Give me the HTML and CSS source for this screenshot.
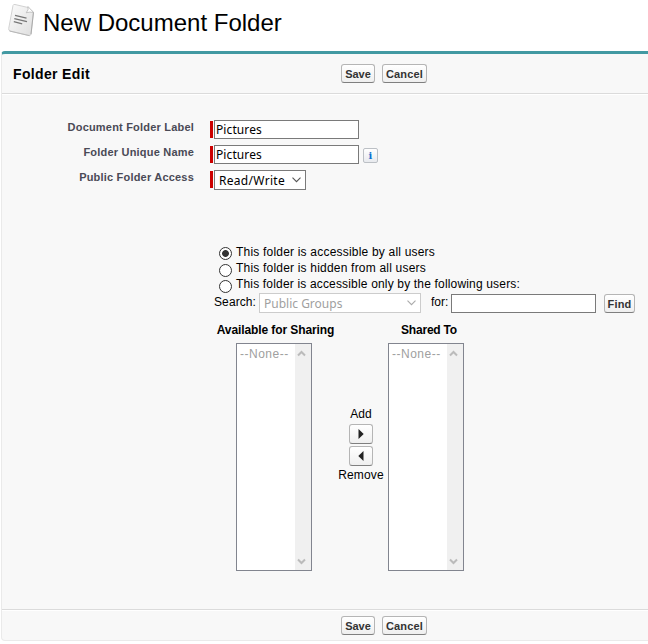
FILE: index.html
```html
<!DOCTYPE html>
<html lang="en">
<head>
<meta charset="utf-8">
<title>New Document Folder</title>
<link rel="stylesheet" href="styles.css">
</head>
<body>
<header class="page-title">
  <svg class="doc-icon" width="28" height="34" viewBox="0 0 28 34">
    <defs><linearGradient id="paper" x1="0" y1="0" x2="1" y2="1"><stop offset="0" stop-color="#fcfcfc"/><stop offset="1" stop-color="#dedede"/></linearGradient></defs>
    <path d="M7 1.5 Q5.5 1 5 2.5 L.7 25.5 Q.5 27.5 2 28 L21 32.5 Q22.5 32.8 23 31.2 L25.5 9 L20 4.5Z" fill="url(#paper)" stroke="#d2d2d2"/>
    <path d="M23 31.2 L25.5 9" stroke="#aaa" fill="none"/>
    <path d="M1.5 28 L21.5 32.7" stroke="#b8b8b8" fill="none"/>
    <path d="M20 3.5 Q21 7 18.2 9.8 Q22 8.5 25.5 9.5Z" fill="#fff" stroke="#b8b8b8" stroke-width=".8"/>
    <path d="M7 12.4 L18.5 15.1 M6.3 15.6 L19 18.7 M5.8 18.7 L14.2 20.8" stroke="#777" stroke-width="1.3" fill="none"/>
  </svg>
  <h1>New Document Folder</h1>
</header>
<form class="panel">
  <div class="bar bar-top">
    <h2>Folder Edit</h2>
    <button type="button" class="btn save">Save</button>
    <button type="button" class="btn cancel">Cancel</button>
  </div>
  <div class="body">
    <div class="fields">
      <label for="label">Document Folder Label</label>
      <div class="field required"><input id="label" class="text" value="Pictures"></div>
      <label for="name">Folder Unique Name</label>
      <div class="field required"><input id="name" class="text" value="Pictures"><span class="info">i</span></div>
      <label for="access">Public Folder Access</label>
      <div class="field required">
        <div id="access" class="select access"><span>Read/Write</span><svg width="9" height="6" viewBox="0 0 9 6"><path d="M.5 .7 L4.5 4.7 L8.5 .7"/></svg></div>
      </div>
    </div>
    <div class="radios">
      <label><input type="radio" name="share" checked><span>This folder is accessible by all users</span></label>
      <label><input type="radio" name="share"><span>This folder is hidden from all users</span></label>
      <label><input type="radio" name="share"><span>This folder is accessible only by the following users:</span></label>
    </div>
    <div class="search">
      <span class="search-label">Search:</span>
      <div class="select groups"><span>Public Groups</span><svg width="9" height="6" viewBox="0 0 9 6"><path d="M.5 .7 L4.5 4.7 L8.5 .7"/></svg></div>
      <span class="for-label">for:</span>
      <input class="text">
      <button type="button" class="btn find">Find</button>
    </div>
    <div class="sharing">
      <div class="column">
        <h3>Available for Sharing</h3>
        <div class="list">
          <span>--None--</span>
          <div class="scroll">
            <svg width="9" height="7" viewBox="0 0 9 7"><path d="M1 5.5 L4.5 2 L8 5.5"/></svg>
            <svg width="9" height="7" viewBox="0 0 9 7"><path d="M1 1.5 L4.5 5 L8 1.5"/></svg>
          </div>
        </div>
      </div>
      <div class="move">
        <span>Add</span>
        <button type="button" class="btn arrow" aria-label="Add"><svg width="6" height="10" viewBox="0 0 6 10"><path d="M.5 0 L5.7 5 L.5 10Z"/></svg></button>
        <button type="button" class="btn arrow" aria-label="Remove"><svg width="6" height="10" viewBox="0 0 6 10"><path d="M5.5 0 L.3 5 L5.5 10Z"/></svg></button>
        <span class="remove">Remove</span>
      </div>
      <div class="column shared">
        <h3>Shared To</h3>
        <div class="list">
          <span>--None--</span>
          <div class="scroll">
            <svg width="9" height="7" viewBox="0 0 9 7"><path d="M1 5.5 L4.5 2 L8 5.5"/></svg>
            <svg width="9" height="7" viewBox="0 0 9 7"><path d="M1 1.5 L4.5 5 L8 1.5"/></svg>
          </div>
        </div>
      </div>
    </div>
  </div>
  <div class="bar bar-bottom">
    <button type="button" class="btn save">Save</button>
    <button type="button" class="btn cancel">Cancel</button>
  </div>
</form>
</body>
</html>
```
FILE: styles.css
```css
* { box-sizing: border-box; }
body {
  margin: 0;
  height: 644px;
  overflow: hidden;
  background: #fff;
  color: #000;
  font: 12px/16px "Liberation Sans", Arial, sans-serif;
}
h1, h2, h3 { margin: 0; white-space: nowrap; }
.page-title { display: flex; height: 51px; padding: 3px 0 0 8px; }
.doc-icon { flex: none; margin-right: 7px; }
h1 { padding-top: 1px; font-size: 24px; font-weight: 400; line-height: 38px; }
.panel {
  margin-left: 1px;
  height: 590px;
  background: #f8f8f8;
  border-top: 3px solid #4299a2;
  border-left: 1px solid #eaeaea;
  border-bottom: 1px solid #eaeaea;
  border-radius: 4px 0 0 4px;
}
.bar { display: flex; align-items: flex-start; }
.bar-top {
  height: 41px;
  padding: 10px 0 0 11px;
  border-bottom: 1px solid #fff;
  box-shadow: inset 0 -1px #dbdbdb;
}
h2 { width: 328px; font-size: 14px; line-height: 20px; letter-spacing: .35px; }
.bar-bottom {
  height: 31px;
  padding: 6px 0 0 339px;
  border-top: 1px solid #dbdbdb;
  box-shadow: inset 0 1px #fff;
}
.btn {
  display: flex;
  align-items: center;
  justify-content: center;
  flex: none;
  height: 19px;
  margin: 0;
  padding: 1px 0 0;
  border: 1px solid;
  border-color: #b5b5b5 #b5b5b5 #7f7f7f;
  border-radius: 3px;
  background: linear-gradient(#fff, #efefef);
  color: #333;
  font: bold 11px/16px "Liberation Sans", Arial, sans-serif;
}
.save { width: 34px; margin-right: 7px; }
.cancel { width: 45px; letter-spacing: .15px; }
.find { width: 31px; margin-left: 8px; padding: 0; letter-spacing: .2px; }
.body { height: 514px; padding-top: 24px; }
.fields {
  display: grid;
  grid-template-columns: 192px auto;
  grid-auto-rows: 25px;
  column-gap: 16px;
  margin-bottom: 50px;
}
.fields label {
  text-align: right;
  color: #4a4a56;
  font-size: 11px;
  font-weight: 700;
  letter-spacing: .2px;
}
.field { display: flex; align-items: flex-start; padding-top: 1px; }
.required::before {
  content: "";
  width: 3px;
  height: 17px;
  margin: 1px 1px 0 0;
  background: #c00;
}
.text {
  width: 145px;
  height: 19px;
  margin: 0;
  padding: 0 1px;
  border: 1px solid #7a7a7a;
  border-radius: 0;
  background: #fff;
  color: #000;
  font: 12px/17px "Noto Sans", sans-serif;
  letter-spacing: .1px;
}
.info {
  width: 15px;
  height: 15px;
  margin: 3px 0 0 4px;
  border: 1px solid #bcc0c5;
  border-radius: 2px;
  background: linear-gradient(#fff, #e8eaee);
  color: #0b6fd0;
  text-align: center;
  font: bold 10px/13px "DejaVu Serif", serif;
}
.select {
  display: flex;
  align-items: center;
  justify-content: space-between;
  height: 20px;
  padding: 1px 4px;
  border: 1px solid #7a7a7a;
  background: #fff;
  font: 12px/18px "Noto Sans", sans-serif;
}
.select svg { fill: none; stroke: #555; stroke-width: 1.1; }
.access { width: 92px; letter-spacing: .3px; }
.access span, .groups span { padding-top: 1px; }
.groups { width: 162px; border-color: #ccc; color: #a0a0a0; }
.groups svg { stroke: #aaa; }
.radios { padding-left: 217px; }
.radios label { display: flex; height: 16px; white-space: nowrap; letter-spacing: .2px; }
.radios label:last-child { letter-spacing: .17px; }
.radios input {
  appearance: none;
  flex: none;
  width: 13px;
  height: 13px;
  margin: 3px 4px 0 0;
  border: 1px solid #333;
  border-radius: 50%;
  background: #fff;
}
.radios label + label input { margin-top: 4px; }
.radios input:checked { background: radial-gradient(circle, #333 3px, #fff 3.8px); }
.search { display: flex; align-items: flex-start; height: 30px; padding: 1px 0 0 212px; }
.search > span { padding-top: 1px; white-space: nowrap; }
.search-label { width: 45px; letter-spacing: .1px; }
.for-label { width: 20px; margin-left: 10px; }
.search .text, .search .btn { margin-top: 1px; }
.sharing { display: flex; padding-left: 212px; }
.column { display: flex; flex-direction: column; align-items: center; width: 123px; }
h3 { font-size: 12px; line-height: 16px; margin-bottom: 5px; letter-spacing: -.1px; }
.list {
  display: flex;
  justify-content: space-between;
  width: 76px;
  height: 228px;
  margin-left: -3px;
  border: 1px solid #82858f;
  background: #fff;
  color: #a0a0a0;
  line-height: 20px;
}
.list span { padding-left: 3px; letter-spacing: .5px; }
.scroll {
  display: flex;
  flex-direction: column;
  justify-content: space-between;
  width: 16px;
  padding: 6px 0 5px 2px;
  background: #f0f0f0;
}
.scroll svg { fill: none; stroke: #bbb; stroke-width: 2; }
.move {
  display: flex;
  flex-direction: column;
  align-items: center;
  width: 50px;
  margin: 84px -20px 0 -1px;
}
.shared h3 { margin-left: 3px; letter-spacing: -.2px; }
.arrow { width: 24px; height: 20px; margin: 2px 0 0; padding: 0; }
.arrow svg { fill: #222; }
.remove { margin-top: 1px; letter-spacing: .15px; }
```
